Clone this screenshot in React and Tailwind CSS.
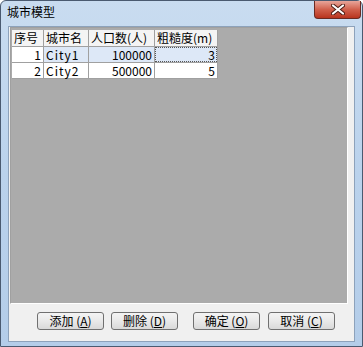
import React from "react";

const font = { fontFamily: '"Noto Sans CJK SC", "Liberation Sans", sans-serif' };

const cols = [
  { label: "序号", w: "w-[32px]" },
  { label: "城市名", w: "w-[45px]" },
  { label: "人口数(人)", w: "w-[66px]" },
  { label: "粗糙度(m)", w: "w-[63px]" },
];

const rows = [
  { id: 1, name: "City1", pop: "100000", rough: "3", selected: true },
  { id: 2, name: "City2", pop: "500000", rough: "5" },
];

function Btn({ label, hot }) {
  return (
    <button
      type="button"
      className="h-[18px] w-[67px] rounded-[3px] border border-[#707070] bg-gradient-to-b from-[#f4f4f4] via-[#e9e9e9] to-[#d9d9d9] text-[12px] leading-[16px] text-black flex items-center justify-center"
    >
      {label}&nbsp;(<span className="underline">{hot}</span>)
    </button>
  );
}

export default function App() {
  return (
    <div className="w-[363px] h-[347px] overflow-hidden bg-white" style={font}>
      <div className="w-[363px] h-[347px] flex flex-col rounded-t-[6px] border border-[#4a5a70] bg-gradient-to-b from-[#c9dcf0] via-[#bad2ec] to-[#b4cde9]">
        {/* title bar */}
        <div className="h-[25px] flex items-start relative">
          <span className="ml-[6px] mt-[3px] text-[12px] leading-[16px] text-black">城市模型</span>
          <div className="absolute right-[1px] top-0 w-[47px] h-[18px] rounded-b-[4px] border border-[#6b2a22] border-t-0 bg-gradient-to-b from-[#e7a59a] via-[#d0604c] to-[#b8331d] flex items-center justify-center">
            <svg width="14" height="11" viewBox="0 0 14 11">
              <path d="M2 1.5 L12 9.5 M12 1.5 L2 9.5" stroke="#4a1a12" strokeWidth="4" strokeLinecap="round" />
              <path d="M2 1.5 L12 9.5 M12 1.5 L2 9.5" stroke="#ffffff" strokeWidth="2.2" strokeLinecap="round" />
            </svg>
          </div>
        </div>
        {/* client */}
        <div className="mx-[7px] h-[316px] border border-[#8da2bb] bg-[#f0f0f0] flex flex-col">
          <div className="ml-px mr-[6px] h-[277px] border border-t-[#a0a0a0] border-l-[#a0a0a0] border-b-white border-r-white bg-[#ababab]">
            <div className="mt-[2px] ml-px">
              <div className="flex">
                {cols.map((c) => (
                  <div
                    key={c.label}
                    className={`${c.w} h-[17px] bg-[#f4f4f4] border-r border-b border-[#a0a0a0] text-[12px] leading-[16px] text-black pl-[2px] whitespace-nowrap overflow-hidden`}
                  >
                    {c.label}
                  </div>
                ))}
              </div>
              {rows.map((r) => {
                const sel = r.selected ? "bg-[#dde8f7]" : "bg-white";
                return (
                  <div key={r.id} className="flex">
                    <div className="w-[32px] h-[16px] bg-white border-r border-b border-[#a0a0a0] text-[12px] leading-[15px] text-right pr-[2px]">
                      {r.id}
                    </div>
                    <div className={`w-[45px] h-[16px] ${sel} border-r border-b border-[#a0a0a0] text-[12px] leading-[15px] pl-[2px] tracking-[1px]`}>
                      {r.name}
                    </div>
                    <div className={`w-[66px] h-[16px] ${sel} border-r border-b border-[#a0a0a0] text-[12px] leading-[15px] text-right pr-[2px]`}>
                      {r.pop}
                    </div>
                    <div className={`w-[63px] h-[16px] ${sel} border-r border-b border-[#a0a0a0] text-[12px] leading-[15px] text-right`}>
                      {r.selected ? (
                        <div className="h-full border border-dotted border-[#555] pr-[1px] leading-[13px]">{r.rough}</div>
                      ) : (
                        <div className="pr-[2px]">{r.rough}</div>
                      )}
                    </div>
                  </div>
                );
              })}
            </div>
          </div>
          <div className="flex items-center mt-[8px] pl-[28px]">
            <Btn label="添加" hot="A" />
            <div className="w-[7px]" />
            <Btn label="删除" hot="D" />
            <div className="w-[15px]" />
            <Btn label="确定" hot="O" />
            <div className="w-[8px]" />
            <Btn label="取消" hot="C" />
          </div>
        </div>
      </div>
    </div>
  );
}
